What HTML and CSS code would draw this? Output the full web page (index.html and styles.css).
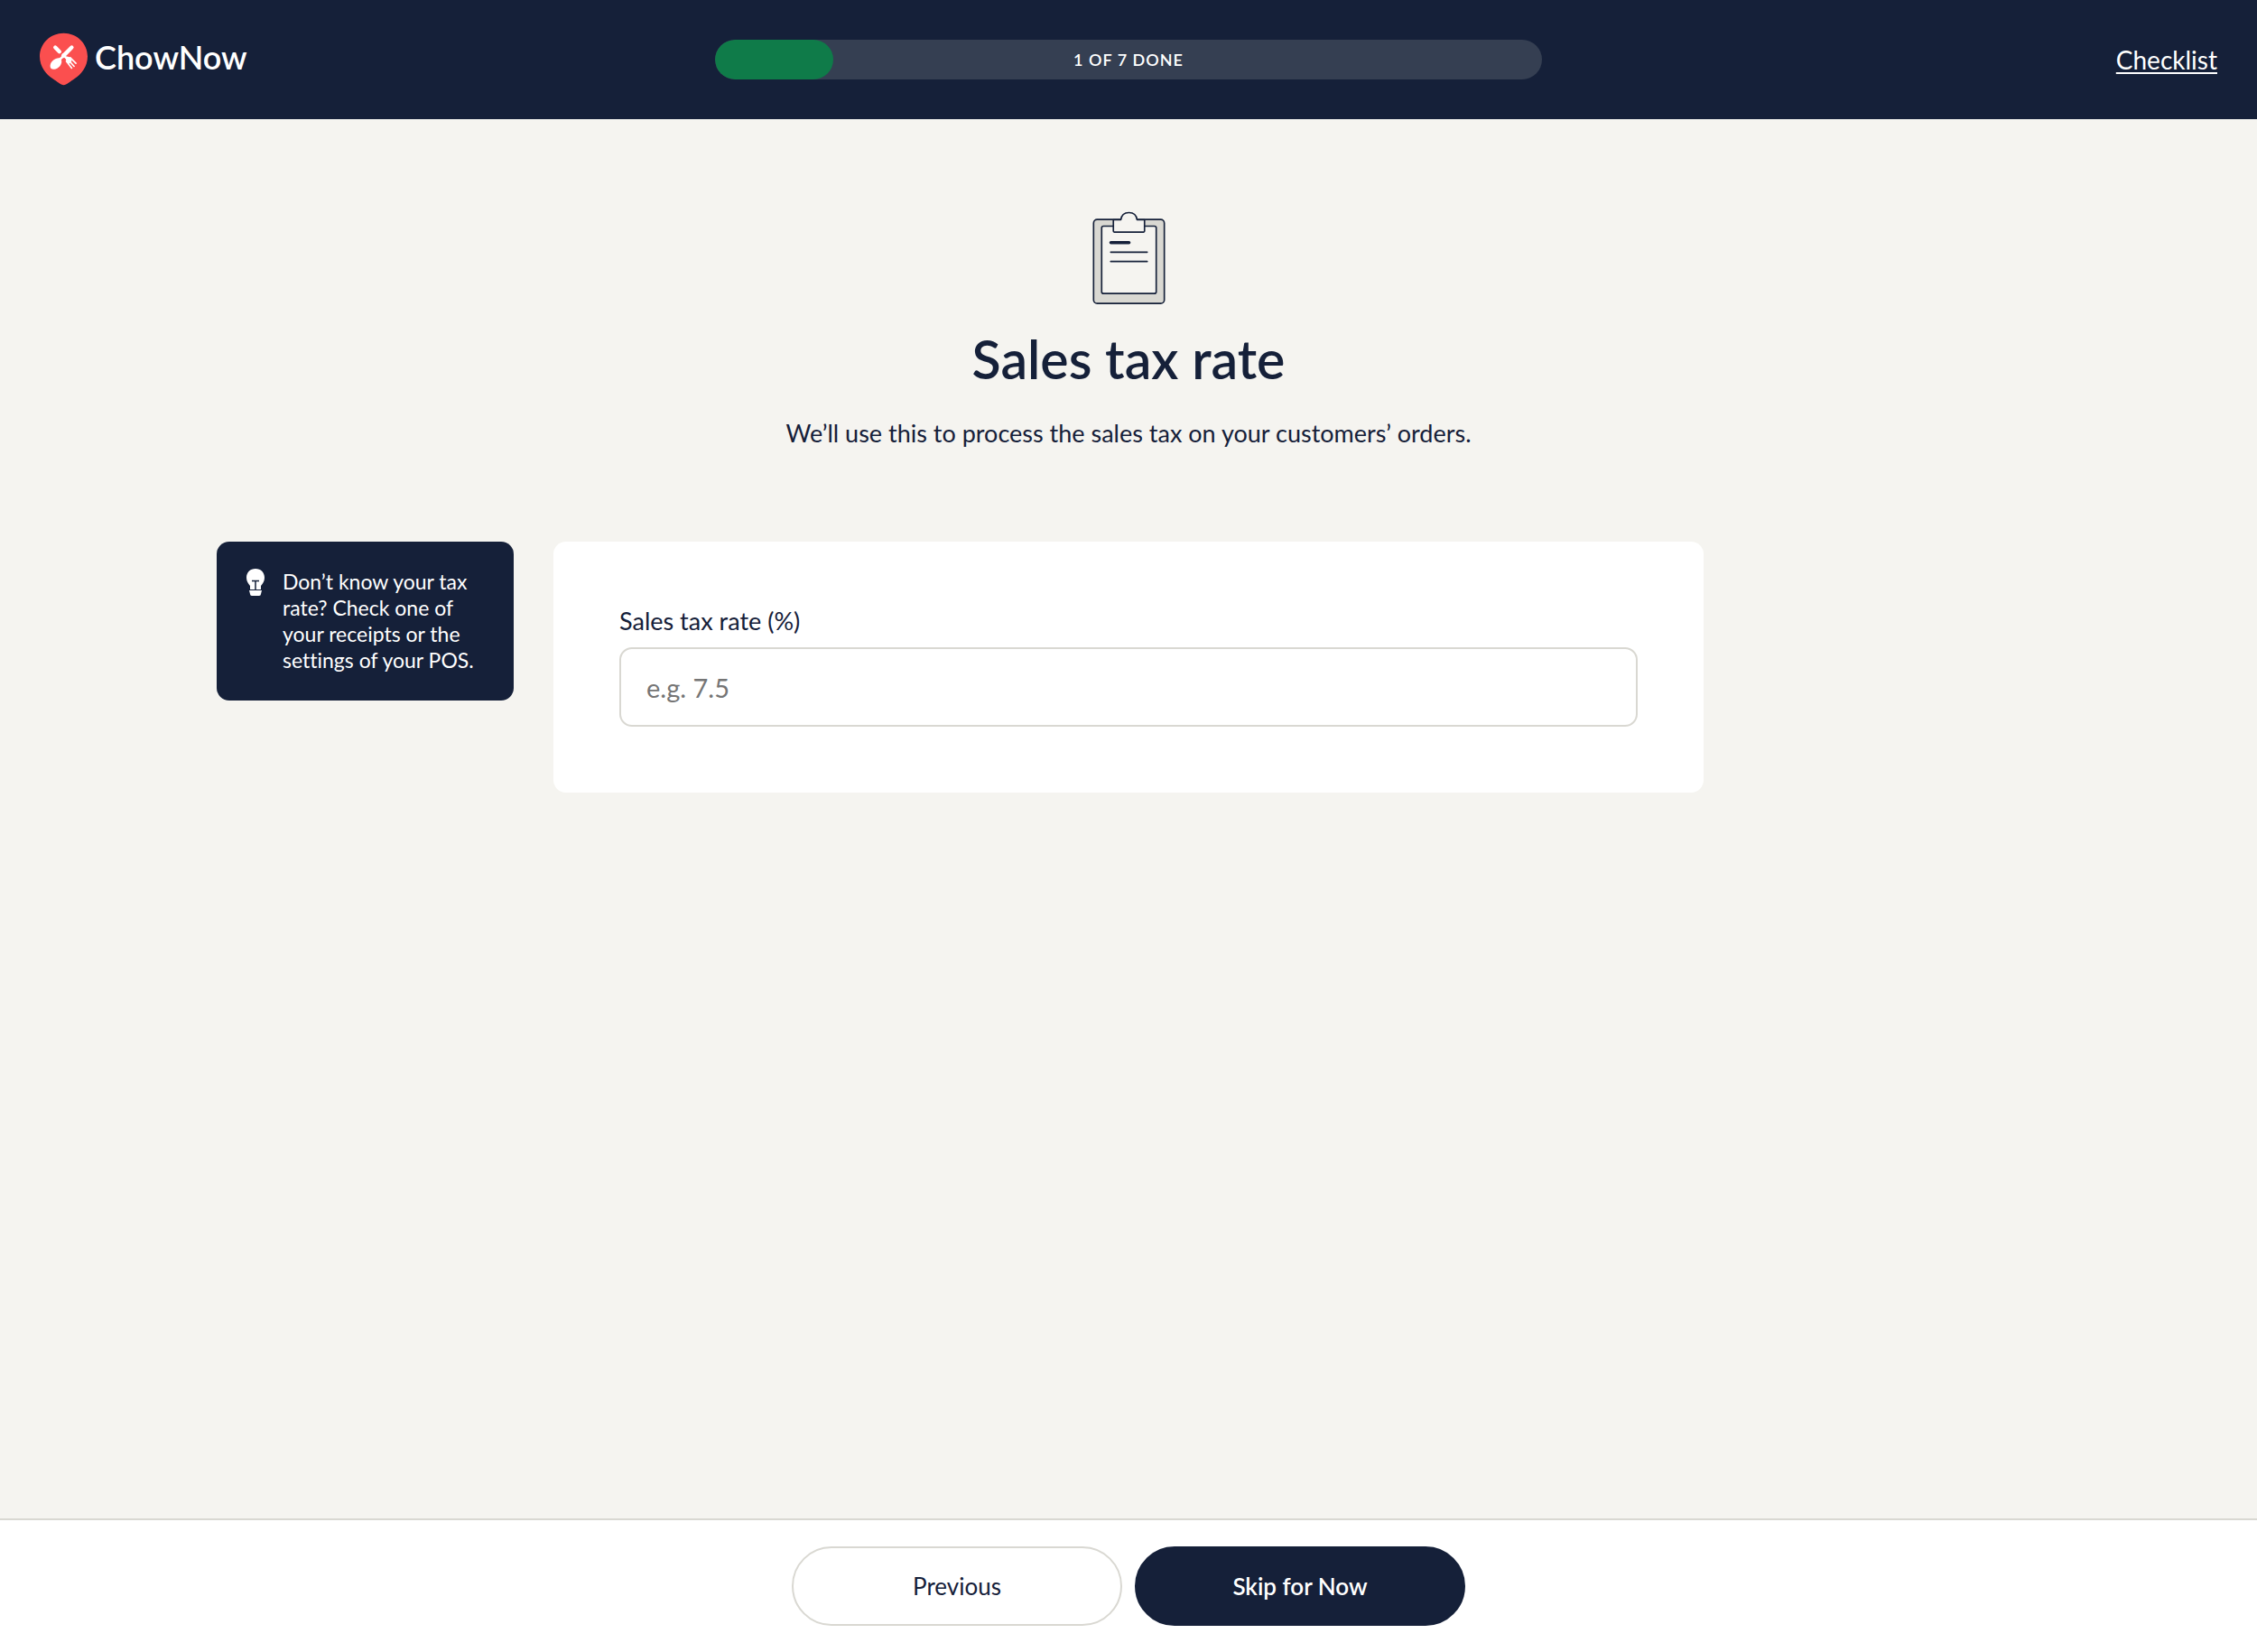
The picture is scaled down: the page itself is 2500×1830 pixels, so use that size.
FILE: index.html
```html
<!DOCTYPE html>
<html lang="en">
<head>
<meta charset="utf-8">
<meta name="viewport" content="width=device-width, initial-scale=1">
<title>Sales tax rate – ChowNow</title>
<link rel="stylesheet" href="styles.css">
</head>
<body>
<header class="header">
  <div class="brand">
    <svg class="brand-mark" viewBox="0 0 160 174" aria-hidden="true">
      <path fill="#fb4f4f" d="M80 0C124 0 160 34 160 78C160 112 139 138 116 153C102 162 90 174 80 174S58 162 44 153C21 138 0 112 0 78C0 34 36 0 80 0Z"/>
      <g fill="none" stroke="#fff" stroke-linecap="round">
        <path stroke-width="13" d="M52 48L66 62"/>
        <path stroke-width="13" d="M107 48L79 76"/>
        <path stroke-width="8" d="M80 76L64 91M78 72L94 88"/>
        <path stroke-width="5" d="M102 82L121 101M95 89L115 111M89 94L107 117"/>
      </g>
      <path fill="#fff" d="M72 88C78 104 62 121 48 121C38 121 34 116 35 108C37 94 54 81 68 84ZM86 82L92 78L104 82L107 94L99 103L90 98Z"/>
    </svg>
    <span class="brand-name">ChowNow</span>
  </div>
  <div class="progress" role="progressbar" aria-valuemin="0" aria-valuemax="7" aria-valuenow="1" aria-label="Setup progress">
    <div class="progress-fill" style="width: 14.3%"></div>
    <span class="progress-label">1 OF 7 DONE</span>
  </div>
  <a class="checklist" href="#checklist">Checklist</a>
</header>

<main class="main">
  <div class="intro">
    <svg class="clipboard" viewBox="58 40 244 312" aria-hidden="true">
      <g stroke="#152039" stroke-width="5" stroke-linejoin="round" stroke-linecap="round">
        <rect x="62" y="67" width="236" height="280" rx="12" fill="#d9d8d2"/>
        <rect x="89" y="89" width="182" height="225" rx="6" fill="#f5f4f0"/>
        <path fill="#f5f4f0" d="M128 68H153C155 52 166 44 180 44S205 52 207 68H232V106Q232 109 229 109H131Q128 109 128 106Z"/>
        <path fill="none" d="M119 176H241M119 207H241"/>
        <path fill="none" stroke-width="11" d="M120 144H180"/>
      </g>
    </svg>
    <h1 class="title">Sales tax rate</h1>
    <p class="subtitle">We’ll use this to process the sales tax on your customers’ orders.</p>
  </div>

  <div class="content">
    <aside class="tip">
      <svg class="bulb" viewBox="0 0 22 30" aria-hidden="true">
        <path fill="#fff" d="M11 0C17 0 21 4 21 10C21 14 19 16 17 19V22C17 23 17 23 16 23H6C5 23 5 23 5 22V19C3 16 1 14 1 10C1 4 5 0 11 0ZM4 24H18L17 28Q17 30 15 30H7Q5 30 5 28Z"/>
        <path fill="none" stroke="#152039" d="M7 13.5H15M11 13V23" stroke-width="1.5"/>
      </svg>
      <p class="tip-text">Don’t know your tax rate? Check one of your receipts or the settings of your POS.</p>
    </aside>
    <form class="card">
      <label class="label" for="tax-rate">Sales tax rate (%)</label>
      <input class="input" id="tax-rate" type="text" inputmode="decimal" placeholder="e.g. 7.5">
    </form>
  </div>
</main>

<footer class="footer">
  <button class="button button-secondary" type="button">Previous</button>
  <button class="button button-primary" type="button">Skip for Now</button>
</footer>
</body>
</html>
```
FILE: styles.css
```css
:root {
  --navy: #152039;
  --sand: #f5f4f0;
  --line: #d9d8d2;
}

* {
  box-sizing: border-box;
}

body {
  margin: 0;
  min-height: 100vh;
  display: flex;
  flex-direction: column;
  background: var(--sand);
  color: var(--navy);
  font-family: Lato, "Liberation Sans", sans-serif;
  font-size: 27px;
  font-variant-ligatures: none;
  line-height: 40px;
}

.header {
  display: grid;
  grid-template-columns: 1fr minmax(0, 916px) 1fr;
  align-items: center;
  gap: 24px;
  padding: 36px 44px;
  border-bottom: 1px solid var(--navy);
  background: var(--navy);
  color: #fff;
}

.brand {
  display: flex;
  align-items: center;
  gap: 8px;
}

.brand-mark {
  width: 53px;
  height: 59px;
}

.brand-name {
  font-size: 36px;
  font-weight: 600;
  line-height: 40px;
  padding-bottom: 6px;
}

.progress {
  display: grid;
  height: 44px;
  border-radius: 22px;
  overflow: hidden;
  background: #353f52;
}

.progress-fill,
.progress-label {
  grid-area: 1 / 1;
}

.progress-fill {
  border-radius: 22px;
  background: #0f7b49;
}

.progress-label {
  place-self: center;
  font-size: 18px;
  font-weight: 600;
  line-height: 24px;
  letter-spacing: 1px;
}

.checklist {
  justify-self: end;
  color: #fff;
  font-size: 28px;
  text-decoration-thickness: 2px;
  text-underline-offset: 3px;
}

.main {
  flex: 1;
  padding: 102px 44px 44px;
}

.intro {
  display: flex;
  flex-direction: column;
  align-items: center;
  text-align: center;
}

.clipboard {
  width: 81px;
  height: 104px;
}

.title {
  margin: 24px 0 0;
  font-size: 59px;
  font-weight: 600;
  line-height: 72px;
}

.subtitle {
  margin: 26px 0 0;
}

.content {
  display: grid;
  grid-template-columns: 329px minmax(0, 1274px) 329px;
  justify-content: center;
  align-items: start;
  gap: 44px;
  margin-top: 100px;
}

.tip {
  display: flex;
  gap: 19px;
  padding: 30px 32px;
  border-radius: 14px;
  background: var(--navy);
  color: #fff;
}

.bulb {
  flex: none;
  width: 22px;
  height: 30px;
}

.tip-text {
  margin: 0;
  font-size: 23px;
  line-height: 29px;
}

.card {
  display: flex;
  flex-direction: column;
  gap: 9px;
  padding: 68px 73px 73px;
  border-radius: 14px;
  background: #fff;
}

.input {
  width: 100%;
  height: 88px;
  padding: 0 28px;
  border: 2px solid var(--line);
  border-radius: 14px;
  background: #fff;
  color: var(--navy);
  font: inherit;
  font-size: 29px;
}

.input::placeholder {
  color: #757575;
  opacity: 1;
}

.footer {
  display: flex;
  justify-content: center;
  gap: 14px;
  padding: 29px 44px;
  border-top: 2px solid var(--line);
  background: #fff;
}

.button {
  width: 366px;
  height: 88px;
  border: 2px solid var(--navy);
  border-radius: 44px;
  font: inherit;
  font-size: 26px;
  cursor: pointer;
}

.button-secondary {
  border-color: var(--line);
  background: #fff;
  color: var(--navy);
}

.button-primary {
  background: var(--navy);
  color: #fff;
  font-weight: 600;
}
```
